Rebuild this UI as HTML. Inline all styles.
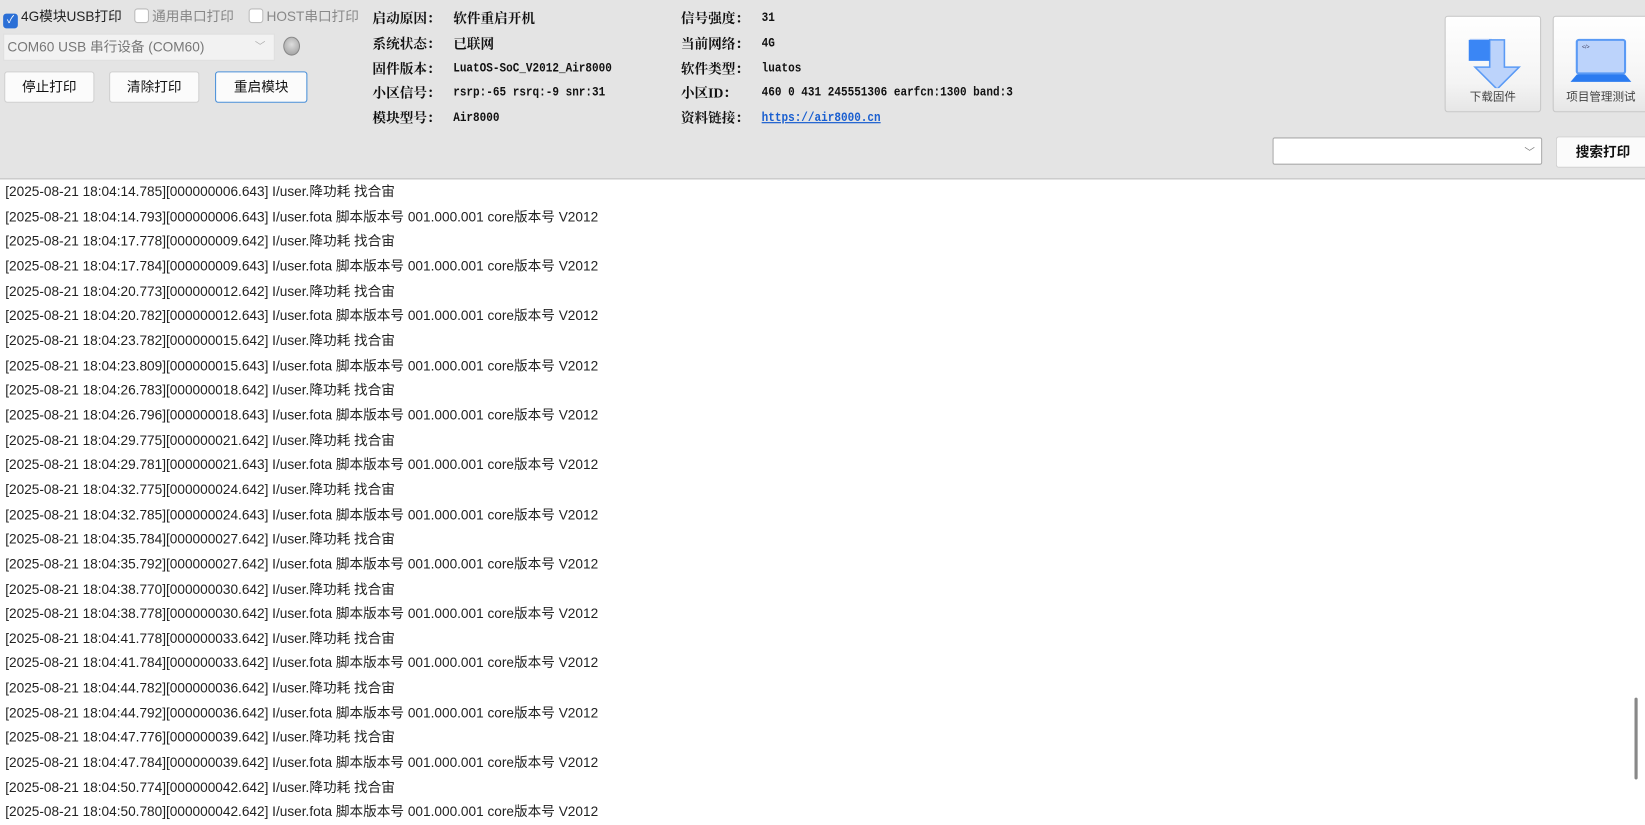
<!DOCTYPE html>
<html><head><meta charset="utf-8"><style>
body{margin:0;width:1645px;height:823px;overflow:hidden;background:#fff;font-family:"Liberation Sans","Noto Sans CJK SC",sans-serif;position:relative}
#w{position:absolute;left:0;top:0;width:1568px;height:785px;transform:scale(1.0491);transform-origin:0 0}
.top{position:absolute;left:0;top:0;width:1568px;height:170px;background:#e4e4e4;border-bottom:1px solid #bfbfbf}
.a{position:absolute;white-space:nowrap}
.cb{position:absolute;font-size:13px;color:#222}
.box{display:inline-block;width:12px;height:12px;border:1px solid #bbb;border-radius:3px;background:#fff;vertical-align:-2px;margin-right:3px}
.btn{position:absolute;height:28px;background:#fbfbfb;border:1px solid #d0d0d0;border-radius:3px;font-size:13px;text-align:center;line-height:28px;color:#111}
.info{position:absolute;font-size:13px;font-weight:bold;color:#111;font-family:"Liberation Serif","Noto Serif CJK SC",serif}
.mono{font-family:"Liberation Mono","Noto Sans CJK SC",monospace;font-size:10.5px;font-weight:bold;margin-top:3px;transform:scaleY(1.15);transform-origin:0 0}
.big{position:absolute;top:15px;width:90px;height:90px;border:1px solid #c8c8c8;border-radius:3px;background:linear-gradient(#fff,#f4f4f4 70%,#e6e6e6);font-size:11px;color:#444;text-align:center}
.log{position:absolute;left:5px;top:171px;font-size:13px;color:#222;line-height:23.65px;white-space:nowrap}
</style></head><body><div id="w">
<div class="top"></div>
<div class="cb" style="left:3px;top:5px"><span class="box" style="background:#2b6fd6;border-color:#2b6fd6;color:#fff;font-size:10px;line-height:12px;text-align:center">✓</span>4G模块USB打印</div>
<div class="cb" style="left:128px;top:5px;color:#888"><span class="box"></span>通用串口打印</div>
<div class="cb" style="left:237px;top:5px;color:#888"><span class="box"></span>HOST串口打印</div>
<div class="a" style="left:3px;top:32px;width:254px;height:24px;background:#f2f2f2;border:1px solid #ddd;font-size:13px;color:#777;line-height:24px;padding-left:3px">COM60 USB 串行设备 (COM60)<span style="position:absolute;right:8px;color:#aaa;font-size:10px">﹀</span></div>
<div class="a" style="left:270px;top:35px;width:14px;height:16px;border-radius:50%;background:radial-gradient(circle at 50% 40%,#ddd,#999);border:1px solid #888"></div>
<div class="btn" style="left:4px;top:68px;width:84px">停止打印</div>
<div class="btn" style="left:104px;top:68px;width:84px">清除打印</div>
<div class="btn" style="left:205px;top:68px;width:86px;border-color:#4a90d9">重启模块</div>
<div class="info" style="left:355px;top:7px">启动原因：</div><div class="info" style="left:432px;top:7px">软件重启开机</div>
<div class="info" style="left:355px;top:31px">系统状态：</div><div class="info" style="left:432px;top:31px">已联网</div>
<div class="info" style="left:355px;top:55px">固件版本：</div><div class="info mono" style="left:432px;top:56px">LuatOS-SoC_V2012_Air8000</div>
<div class="info" style="left:355px;top:78px">小区信号：</div><div class="info mono" style="left:432px;top:79px">rsrp:-65 rsrq:-9 snr:31</div>
<div class="info" style="left:355px;top:102px">模块型号：</div><div class="info mono" style="left:432px;top:103px">Air8000</div>
<div class="info" style="left:649px;top:7px">信号强度：</div><div class="info mono" style="left:726px;top:8px">31</div>
<div class="info" style="left:649px;top:31px">当前网络：</div><div class="info mono" style="left:726px;top:32px">4G</div>
<div class="info" style="left:649px;top:55px">软件类型：</div><div class="info mono" style="left:726px;top:56px">luatos</div>
<div class="info" style="left:649px;top:78px">小区ID：</div><div class="info mono" style="left:726px;top:79px">460 0 431 245551306 earfcn:1300 band:3</div>
<div class="info" style="left:649px;top:102px">资料链接：</div><div class="info mono" style="left:726px;top:103px;color:#1a5fd0;text-decoration:underline">https://air8000.cn</div>
<div class="big" style="left:1377px"><svg width="90" height="68" viewBox="0 0 90 68" style="display:block"><rect x="23" y="21" width="21" height="21" fill="#bcd3fb"/><path d="M42 22h14v26h14l-21 21-21-21h14z" fill="#bcd3fb" stroke="#5a9af5" stroke-width="1.5"/><rect x="22" y="22" width="20" height="20" fill="#3a86f5"/></svg><div>下载固件</div></div>
<div class="big" style="left:1480px"><svg width="90" height="68" viewBox="0 0 90 68" style="display:block"><rect x="22" y="22" width="46" height="32" rx="2" fill="#bcd3fb" stroke="#5a9af5" stroke-width="2"/><path d="M16 62h58l-6-7H22z" fill="#2b7bf0"/><text x="27" y="30" font-size="5" fill="#335">&lt;/&gt;</text></svg><div>项目管理测试</div></div>
<div class="a" style="left:1213px;top:131px;width:255px;height:24px;background:#fff;border:1px solid #aaa;border-radius:2px"><span style="position:absolute;right:6px;top:4px;color:#777;font-size:10px">﹀</span></div>
<div class="btn" style="left:1483px;top:130px;width:90px;border-right:none;font-weight:bold;text-align:left;padding-left:18px">搜索打印</div>
<div class="a" style="left:1558px;top:665px;width:3px;height:78px;background:#888;border-radius:2px"></div>
<div class="log">
[2025-08-21 18:04:14.785][000000006.643] I/user.降功耗 找合宙<br>
[2025-08-21 18:04:14.793][000000006.643] I/user.fota 脚本版本号 001.000.001 core版本号 V2012<br>
[2025-08-21 18:04:17.778][000000009.642] I/user.降功耗 找合宙<br>
[2025-08-21 18:04:17.784][000000009.643] I/user.fota 脚本版本号 001.000.001 core版本号 V2012<br>
[2025-08-21 18:04:20.773][000000012.642] I/user.降功耗 找合宙<br>
[2025-08-21 18:04:20.782][000000012.643] I/user.fota 脚本版本号 001.000.001 core版本号 V2012<br>
[2025-08-21 18:04:23.782][000000015.642] I/user.降功耗 找合宙<br>
[2025-08-21 18:04:23.809][000000015.643] I/user.fota 脚本版本号 001.000.001 core版本号 V2012<br>
[2025-08-21 18:04:26.783][000000018.642] I/user.降功耗 找合宙<br>
[2025-08-21 18:04:26.796][000000018.643] I/user.fota 脚本版本号 001.000.001 core版本号 V2012<br>
[2025-08-21 18:04:29.775][000000021.642] I/user.降功耗 找合宙<br>
[2025-08-21 18:04:29.781][000000021.643] I/user.fota 脚本版本号 001.000.001 core版本号 V2012<br>
[2025-08-21 18:04:32.775][000000024.642] I/user.降功耗 找合宙<br>
[2025-08-21 18:04:32.785][000000024.643] I/user.fota 脚本版本号 001.000.001 core版本号 V2012<br>
[2025-08-21 18:04:35.784][000000027.642] I/user.降功耗 找合宙<br>
[2025-08-21 18:04:35.792][000000027.642] I/user.fota 脚本版本号 001.000.001 core版本号 V2012<br>
[2025-08-21 18:04:38.770][000000030.642] I/user.降功耗 找合宙<br>
[2025-08-21 18:04:38.778][000000030.642] I/user.fota 脚本版本号 001.000.001 core版本号 V2012<br>
[2025-08-21 18:04:41.778][000000033.642] I/user.降功耗 找合宙<br>
[2025-08-21 18:04:41.784][000000033.642] I/user.fota 脚本版本号 001.000.001 core版本号 V2012<br>
[2025-08-21 18:04:44.782][000000036.642] I/user.降功耗 找合宙<br>
[2025-08-21 18:04:44.792][000000036.642] I/user.fota 脚本版本号 001.000.001 core版本号 V2012<br>
[2025-08-21 18:04:47.776][000000039.642] I/user.降功耗 找合宙<br>
[2025-08-21 18:04:47.784][000000039.642] I/user.fota 脚本版本号 001.000.001 core版本号 V2012<br>
[2025-08-21 18:04:50.774][000000042.642] I/user.降功耗 找合宙<br>
[2025-08-21 18:04:50.780][000000042.642] I/user.fota 脚本版本号 001.000.001 core版本号 V2012
</div>
</div></body></html>
